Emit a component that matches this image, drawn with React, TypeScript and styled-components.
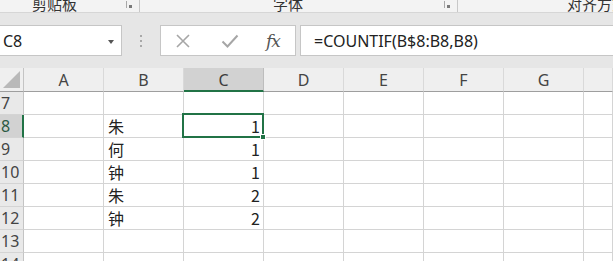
import React from "react";
import styled, { createGlobalStyle } from "styled-components";

const Global = createGlobalStyle`
  html, body { margin: 0; padding: 0; background: #ffffff; overflow: hidden; }
  body { font-family: "Noto Sans", "Noto Sans CJK SC", sans-serif; }
`;

const Page = styled.div`
  width: 613px;
  height: 261px;
  overflow: hidden;
  display: flex;
  flex-direction: column;
  background: #fff;
`;

const Ribbon = styled.div`
  height: 12px;
  flex: 0 0 12px;
  background: #f3f3f3;
  border-bottom: 1px solid #d6d6d6;
  display: flex;
  overflow: hidden;
`;

const RibbonGroup = styled.div<{ $w?: number; $labelLeft: number }>`
  position: relative;
  ${(p) => (p.$w ? `width: ${p.$w}px; flex: 0 0 ${p.$w}px;` : "flex: 1;")}
  height: 12px;
  border-right: ${(p) => (p.$w ? "1px solid #c8c8c8" : "none")};
  box-sizing: border-box;
  display: flex;
  align-items: flex-end;
  padding-left: ${(p) => p.$labelLeft}px;
`;

const GroupLabel = styled.span`
  font-family: "Noto Sans CJK SC", sans-serif;
  font-size: 15px;
  line-height: 15px;
  color: #333;
  margin-bottom: 1px;
  white-space: nowrap;
`;

const Launcher = styled.span`
  position: absolute;
  right: 7px;
  top: 1px;
  width: 6px;
  height: 7px;
  border-left: 1px solid #a8a8a8;
  box-sizing: border-box;
  &::after {
    content: "";
    position: absolute;
    right: 0;
    bottom: 0;
    width: 3px;
    height: 3px;
    background: #7a7a7a;
  }
`;

const FormulaBand = styled.div`
  background: #e6e6e6;
  padding: 12px 0 12px 0;
  display: flex;
  align-items: stretch;
  height: 31px;
  flex: 0 0 31px;
`;

const NameBox = styled.div`
  width: 122px;
  height: 31px;
  box-sizing: border-box;
  background: #fff;
  border: 1px solid #c6c6c6;
  border-left: none;
  display: flex;
  align-items: center;
  justify-content: space-between;
  padding: 0 7px 0 3px;
  font-size: 16px;
  color: #222;
`;

const DropArrow = styled.span`
  width: 0;
  height: 0;
  border-left: 3.5px solid transparent;
  border-right: 3.5px solid transparent;
  border-top: 4px solid #555;
  margin-top: 2px;
`;

const Grip = styled.div`
  width: 38px;
  display: flex;
  flex-direction: column;
  align-items: center;
  justify-content: center;
  gap: 3px;
  span {
    width: 2px;
    height: 2px;
    background: #a8a8a8;
    display: block;
  }
`;

const FxButtons = styled.div`
  width: 136px;
  height: 31px;
  box-sizing: border-box;
  background: #fff;
  border: 1px solid #c6c6c6;
  display: flex;
  align-items: center;
  padding-left: 14px;
  gap: 0;
`;

const FxSlot = styled.span<{ $w: number }>`
  width: ${(p) => p.$w}px;
  display: flex;
  align-items: center;
  justify-content: flex-start;
`;

const FxLabel = styled.span`
  font-family: "DejaVu Serif", "Liberation Serif", serif;
  font-style: italic;
  font-size: 17px;
  color: #555;
  letter-spacing: -1px;
`;

const FormulaInput = styled.div`
  flex: 1;
  margin-left: 4px;
  height: 31px;
  box-sizing: border-box;
  background: #fff;
  border: 1px solid #c6c6c6;
  border-right: none;
  display: flex;
  align-items: center;
  padding-left: 13px;
  font-size: 16px;
  color: #222;
  white-space: nowrap;
`;

const Sheet = styled.div`
  display: grid;
  grid-template-columns: 24px repeat(7, 80px) 1fr;
  grid-auto-rows: 23px;
  grid-template-rows: 24px;
`;

const Corner = styled.div`
  background: #efefef;
  border-right: 1px solid #c4c4c4;
  border-bottom: 1px solid #9e9e9e;
  box-sizing: border-box;
  position: relative;
  &::after {
    content: "";
    position: absolute;
    right: 3px;
    bottom: 3px;
    width: 0;
    height: 0;
    border-left: 17px solid transparent;
    border-bottom: 17px solid #b9b9b9;
  }
`;

const ColHead = styled.div<{ $sel?: boolean }>`
  background: ${(p) => (p.$sel ? "#d2d2d2" : "#efefef")};
  border-right: 1px solid ${(p) => (p.$sel ? "#bdbdbd" : "#d9d9d9")};
  border-bottom: ${(p) => (p.$sel ? "2px solid #217346" : "1px solid #9e9e9e")};
  box-sizing: border-box;
  display: flex;
  align-items: center;
  justify-content: center;
  font-size: 16px;
  color: ${(p) => (p.$sel ? "#3c3c3c" : "#444")};
  padding-top: ${(p) => (p.$sel ? "1px" : "0")};
`;

const RowHead = styled.div<{ $sel?: boolean }>`
  background: ${(p) => (p.$sel ? "#d2d2d2" : "#e9e9e9")};
  border-right: ${(p) => (p.$sel ? "2px solid #217346" : "1px solid #c4c4c4")};
  border-bottom: 1px solid #d4d4d4;
  box-sizing: border-box;
  display: flex;
  align-items: center;
  justify-content: flex-start;
  padding-left: 1px;
  font-size: 16px;
  color: ${(p) => (p.$sel ? "#2c5a44" : "#444")};
  overflow: hidden;
  white-space: nowrap;
`;

const Cell = styled.div<{ $align?: "left" | "right" }>`
  position: relative;
  border-right: 1px solid #d4d4d4;
  border-bottom: 1px solid #d4d4d4;
  box-sizing: border-box;
  display: flex;
  align-items: center;
  justify-content: ${(p) => (p.$align === "right" ? "flex-end" : "flex-start")};
  padding: 0 3px 0 4px;
  font-size: 16px;
  color: #222;
  font-family: "Noto Sans CJK SC", "Noto Sans", sans-serif;
  white-space: nowrap;
`;

const Selection = styled.div`
  position: absolute;
  left: -2px;
  top: -2px;
  width: 82px;
  height: 25px;
  box-sizing: border-box;
  border: 2px solid #217346;
  pointer-events: none;
  z-index: 2;
  &::after {
    content: "";
    position: absolute;
    right: -4px;
    bottom: -4px;
    width: 6px;
    height: 6px;
    background: #217346;
    border: 1px solid #fff;
    box-sizing: border-box;
  }
`;

const columns = ["A", "B", "C", "D", "E", "F", "G", ""];

type RowData = { n: number; b?: string; c?: string };
const rows: RowData[] = [
  { n: 7 },
  { n: 8, b: "朱", c: "1" },
  { n: 9, b: "何", c: "1" },
  { n: 10, b: "钟", c: "1" },
  { n: 11, b: "朱", c: "2" },
  { n: 12, b: "钟", c: "2" },
  { n: 13 },
  { n: 14 },
];

const XIcon = () => (
  <svg width="16" height="16" viewBox="0 0 16 16">
    <path d="M2 2 L14 14 M14 2 L2 14" stroke="#a6a6a6" strokeWidth="1.6" fill="none" />
  </svg>
);

const CheckIcon = () => (
  <svg width="18" height="16" viewBox="0 0 18 16">
    <path d="M1.5 8.5 L6.5 13.5 L16.5 2.5" stroke="#a6a6a6" strokeWidth="2" fill="none" />
  </svg>
);

export default function App() {
  return (
    <Page>
      <Global />
      <Ribbon>
        <RibbonGroup $w={140} $labelLeft={32}>
          <GroupLabel>剪贴板</GroupLabel>
          <Launcher />
        </RibbonGroup>
        <RibbonGroup $w={318} $labelLeft={133}>
          <GroupLabel>字体</GroupLabel>
          <Launcher />
        </RibbonGroup>
        <RibbonGroup $labelLeft={109}>
          <GroupLabel>对齐方式</GroupLabel>
        </RibbonGroup>
      </Ribbon>
      <FormulaBand>
        <NameBox>
          <span>C8</span>
          <DropArrow />
        </NameBox>
        <Grip>
          <span />
          <span />
          <span />
        </Grip>
        <FxButtons>
          <FxSlot $w={46}>
            <XIcon />
          </FxSlot>
          <FxSlot $w={45}>
            <CheckIcon />
          </FxSlot>
          <FxSlot $w={20}>
            <FxLabel>fx</FxLabel>
          </FxSlot>
        </FxButtons>
        <FormulaInput>=COUNTIF(B$8:B8,B8)</FormulaInput>
      </FormulaBand>
      <Sheet>
        <Corner />
        {columns.map((c, i) => (
          <ColHead key={"h" + i} $sel={c === "C"}>
            {c}
          </ColHead>
        ))}
        {rows.map((r) => (
          <React.Fragment key={r.n}>
            <RowHead $sel={r.n === 8}>{r.n}</RowHead>
            {columns.map((c, i) => {
              if (c === "B")
                return (
                  <Cell key={i} $align="left">
                    {r.b}
                  </Cell>
                );
              if (c === "C")
                return (
                  <Cell key={i} $align="right">
                    {r.c}
                    {r.n === 8 && <Selection />}
                  </Cell>
                );
              return <Cell key={i} />;
            })}
          </React.Fragment>
        ))}
      </Sheet>
    </Page>
  );
}
